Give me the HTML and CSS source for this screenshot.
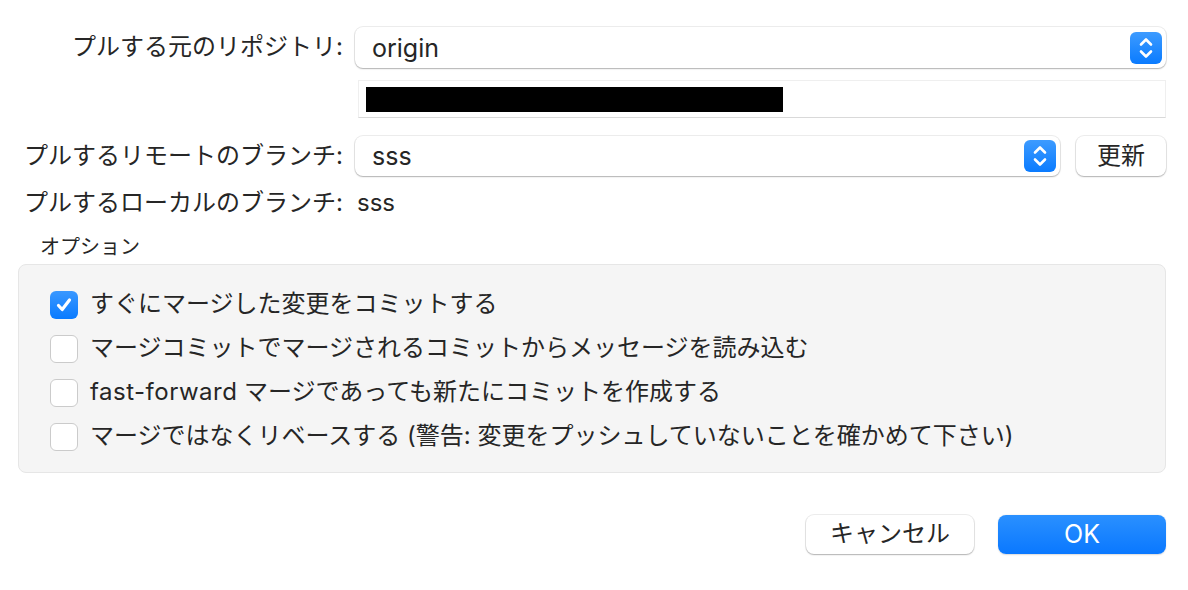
FILE: index.html
```html
<!DOCTYPE html>
<html lang="ja">
<head>
<meta charset="utf-8">
<link rel="stylesheet" href="styles.css">
</head>
<body>
<div class="dialog">
  <div class="form">
    <div class="label">プルする元のリポジトリ:</div>
    <div class="select wide">
      <span class="value">origin</span>
      <span class="stepper"><svg width="18" height="26" viewBox="0 0 18 26"><path d="M4 9.5 L9 4.5 L14 9.5 M4 16.5 L9 21.5 L14 16.5" fill="none" stroke="#fff" stroke-width="2.6" stroke-linecap="round" stroke-linejoin="round"/></svg></span>
    </div>

    <div class="label"></div>
    <div class="textfield"><span class="redact"></span></div>

    <div class="label">プルするリモートのブランチ:</div>
    <div class="ctrl-row">
      <div class="select grow">
        <span class="value">sss</span>
        <span class="stepper"><svg width="18" height="26" viewBox="0 0 18 26"><path d="M4 9.5 L9 4.5 L14 9.5 M4 16.5 L9 21.5 L14 16.5" fill="none" stroke="#fff" stroke-width="2.6" stroke-linecap="round" stroke-linejoin="round"/></svg></span>
      </div>
      <div class="button small">更新</div>
    </div>

    <div class="label local">プルするローカルのブランチ:</div>
    <div class="plain local">sss</div>
  </div>

  <div class="group-title">オプション</div>
  <div class="group">
    <div class="option"><span class="check on"><svg width="20" height="20" viewBox="0 0 20 20"><path d="M4.5 10.5 L8.2 14.5 L15.5 5" fill="none" stroke="#fff" stroke-width="3.2" stroke-linecap="round" stroke-linejoin="round"/></svg></span><span>すぐにマージした変更をコミットする</span></div>
    <div class="option"><span class="check"></span><span>マージコミットでマージされるコミットからメッセージを読み込む</span></div>
    <div class="option"><span class="check"></span><span><span class="latin">fast-forward</span> マージであっても新たにコミットを作成する</span></div>
    <div class="option"><span class="check"></span><span>マージではなくリベースする (警告: 変更をプッシュしていないことを確かめて下さい)</span></div>
  </div>

  <div class="actions">
    <div class="button cancel">キャンセル</div>
    <div class="button primary">OK</div>
  </div>
</div>
</body>
</html>
```

FILE: styles.css
```css
html, body {
  margin: 0;
  padding: 0;
  background: #ffffff;
}
body {
  width: 1188px;
  height: 590px;
  overflow: hidden;
  font-family: "Inter", "Noto Sans CJK JP", sans-serif;
  color: #262626;
  font-size: 24px;
  line-height: 1.2;
}
.dialog {
  padding: 27px 22px 0 18px;
  display: flex;
  flex-direction: column;
}
.form {
  display: grid;
  grid-template-columns: 325px 1fr;
  column-gap: 12px;
  row-gap: 12px;
  align-items: center;
}
.label {
  text-align: right;
  white-space: nowrap;
}
.select {
  height: 41px;
  box-sizing: border-box;
  background: #fff;
  border-radius: 8px;
  box-shadow: 0 0 0 1px rgba(0,0,0,0.07), 0 1px 1.5px rgba(0,0,0,0.25);
  display: flex;
  align-items: center;
  justify-content: space-between;
  padding: 0 4px 0 17px;
}
.select .value {
  font-size: 25px;
}
.stepper {
  width: 32px;
  height: 32px;
  border-radius: 6px;
  background: linear-gradient(#3d9bff, #0a7bff);
  display: flex;
  align-items: center;
  justify-content: center;
}
.textfield {
  height: 38px;
  box-sizing: border-box;
  margin-left: 3px;
  border: 1px solid #efefef;
  border-bottom: 1px solid #d9d9d9;
  display: flex;
  align-items: center;
  padding-left: 7px;
  margin-bottom: 6px;
}
.redact {
  width: 417px;
  height: 25px;
  background: #000;
}
.ctrl-row {
  display: flex;
  gap: 16px;
  align-items: center;
}
.ctrl-row .select {
  height: 40px;
}
.grow {
  flex: 1;
}
.button {
  height: 40px;
  box-sizing: border-box;
  background: #fff;
  border-radius: 8px;
  box-shadow: 0 0 0 1px rgba(0,0,0,0.07), 0 1px 1.5px rgba(0,0,0,0.25);
  display: flex;
  align-items: center;
  justify-content: center;
  font-size: 24px;
  color: #262626;
}
.small {
  width: 90px;
}
.local {
  margin-top: 1px;
}
.plain {
  padding-left: 2px;
}
.latin {
  letter-spacing: 0.5px;
}
.group-title {
  font-size: 20px;
  margin: 15px 0 0 22px;
  line-height: 28px;
}
.group {
  margin-top: 3px;
  background: #f5f5f5;
  border: 1px solid #e6e6e6;
  border-radius: 8px;
  height: 209px;
  box-sizing: border-box;
  padding: 26px 0 0 31px;
  display: flex;
  flex-direction: column;
  gap: 16px;
}
.option {
  display: flex;
  align-items: center;
  gap: 12px;
  height: 28px;
  white-space: nowrap;
}
.check {
  width: 28px;
  height: 28px;
  box-sizing: border-box;
  border-radius: 6px;
  background: #fff;
  border: 1px solid #cbcbcb;
  display: flex;
  align-items: center;
  justify-content: center;
}
.check.on {
  background: linear-gradient(#3a98ff, #0a7bff);
  border: none;
}
.actions {
  display: flex;
  justify-content: flex-end;
  gap: 24px;
  margin-top: 42px;
}
.actions .button {
  width: 168px;
  height: 39px;
}
.primary {
  background: linear-gradient(#2a90ff, #0a78ff);
  color: #fff;
  box-shadow: 0 0.5px 1.5px rgba(0,0,0,0.15);
  font-size: 25px;
}
```
